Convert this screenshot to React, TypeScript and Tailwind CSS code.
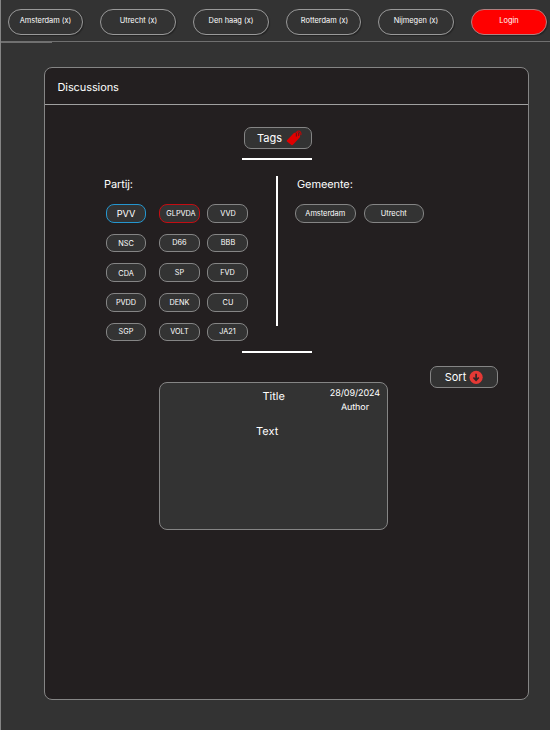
import React from "react";

type Chip = { label: string; border?: string; text?: string };

const cities = [
  { label: "Amsterdam (x)", gap: "ml-[7px]", width: "w-[75px]", nudge: "" },
  { label: "Utrecht (x)", gap: "ml-[17px]", width: "w-[76px]", nudge: "pl-px" },
  { label: "Den haag (x)", gap: "ml-[17px]", width: "w-[76px]", nudge: "" },
  { label: "Rotterdam (x)", gap: "ml-[17px]", width: "w-[75px]", nudge: "pl-[2px]" },
  { label: "Nijmegen (x)", gap: "ml-[17px]", width: "w-[76px]", nudge: "" },
];

const parties: Chip[] = [
  { label: "PVV", border: "border-[#2496cf] text-[9.2px]", text: "pt-[2px]" },
  { label: "GLPVDA", border: "border-[#c40d12] text-[7.3px]", text: "pl-[3px] pt-[2px]" },
  { label: "VVD", text: "pt-[2px] pl-px" },
  { label: "NSC", text: "pt-[3px]" },
  { label: "D66", text: "pt-[2px]" },
  { label: "BBB", text: "pt-[2px] pl-px" },
  { label: "CDA", text: "pt-[3px]" },
  { label: "SP", text: "pt-px" },
  { label: "FVD", text: "pt-px" },
  { label: "PVDD", text: "pt-[2px]" },
  { label: "DENK", text: "pt-[2px]" },
  { label: "CU", text: "pt-[2px] pl-px" },
  { label: "SGP", text: "pt-px" },
  { label: "VOLT", text: "pt-px" },
  { label: "JA21", text: "pt-px" },
];

function TagIcon() {
  return (
    <svg width="16" height="16" viewBox="0 0 16 16" className="shrink-0">
      <path d="M1 10.2 L7.4 3.6 Q8 3 9 2.8 L12.1 2.3 Q13.4 2.2 13.7 3.5 L14.1 6.2 Q14.2 7 13.5 7.8 L7.2 14.6 Q6 15.8 4.8 14.6 L1 11.6 Q.3 10.9 1 10.2Z" fill="#e00000" />
      <path d="M10.2 6.4 V3 Q10.4 1 12.6 1 Q14.8 1 14.9 3 V5.2" fill="none" stroke="#d00000" strokeWidth="1" />
      <path d="M10.4 3.5 V6.2 M12.6 3.2 V5.5" fill="none" stroke="#4a1717" strokeWidth=".8" strokeLinecap="round" />
    </svg>
  );
}

function SortIcon() {
  return (
    <svg width="14" height="14" viewBox="0 0 14 14" className="shrink-0">
      <circle cx="7.1" cy="7.3" r="6.6" fill="#e53935" />
      <path d="M7.1 3.7 V10 M4.4 7.5 L7.1 10.2 L9.8 7.5" fill="none" stroke="#332426" strokeWidth="1.7" />
    </svg>
  );
}

export default function App() {
  return (
    <div className="flex h-[730px] w-[550px] flex-col overflow-hidden border-l border-[#858585] bg-[#333333] font-['Inter',sans-serif] text-white [text-rendering:geometricPrecision]">
      <header className="flex h-[42px] shrink-0 border-b border-[#707070] pt-[9px]">
        {cities.map((c) => (
          <button key={c.label} className={`flex h-[26px] shrink-0 items-center justify-center rounded-full border border-[#999999] pb-[3px] text-[7.4px] shadow-[1px_1px_1px_rgba(0,0,0,0.3)] ${c.gap} ${c.width} ${c.nudge}`}>
            {c.label}
          </button>
        ))}
        <button className="ml-[17px] flex h-[26px] w-[76px] shrink-0 items-center justify-center rounded-full border border-[#b08080] bg-[#ff0000] pb-[3px] text-[7.4px] shadow-[1px_1px_1px_rgba(0,0,0,0.3)]">
          Login
        </button>
      </header>
      <div className="h-px w-[51px] shrink-0 bg-[#707070]" />
      <main className="ml-[43px] mt-[24px] flex h-[633px] w-[485px] shrink-0 flex-col rounded-[8px] border border-[#858585] bg-[#231f20]">
        <h1 className="flex h-[37px] shrink-0 items-center border-b border-[#a0a0a0] pl-[12.5px] pt-[2px] text-[11px] tracking-[-0.1px]">Discussions</h1>

        <button className="ml-[199px] mt-[22px] flex h-[22px] w-[68px] shrink-0 items-center justify-center gap-[4px] rounded-[7px] border border-[#858585] bg-[#333333] pl-[3px] text-[11px]">
          Tags
          <TagIcon />
        </button>
        <div className="ml-[197px] mt-[9px] h-[2px] w-[70px] shrink-0 bg-white" />

        <div className="mt-[16px] flex h-[150px] shrink-0">
          <section className="w-[231px] shrink-0 pl-[59px]">
            <h2 className="h-[28px] text-[11px] leading-[16px] tracking-[-0.1px]">Partij:</h2>
            <div className="ml-[2px] grid w-[142px] auto-rows-[18px] grid-cols-[40px_41px_41px] gap-y-[11.7px] [column-gap:0] justify-between">
              {parties.map((p, i) => (
                <button
                  key={p.label}
                  className={`flex h-[18.5px] items-center justify-center rounded-[8px] border bg-[#333333] ${p.border ?? "border-[#858585] text-[7.3px]"} ${p.text ?? ""} ${i % 3 === 1 ? "ml-[3px] mr-[-3px]" : ""}`}
                >
                  {p.label}
                </button>
              ))}
            </div>
          </section>
          <div className="w-[2px] shrink-0 bg-white" />
          <section className="pl-[17px]">
            <h2 className="h-[28px] pl-[2px] text-[11px] leading-[16px] tracking-[-0.1px]">Gemeente:</h2>
            <div className="flex gap-[8px]">
              {["Amsterdam", "Utrecht"].map((g) => (
                <button key={g} className="flex h-[18.5px] w-[60.5px] items-center justify-center rounded-[9px] border border-[#858585] bg-[#333333] text-[7.4px]">
                  {g}
                </button>
              ))}
            </div>
          </section>
        </div>
        <div className="ml-[197px] mt-[25px] h-[2px] w-[70px] shrink-0 bg-white" />

        <div className="mt-[13px] flex shrink-0">
          <article className="ml-[114px] mt-[16px] h-[148px] w-[229px] shrink-0 rounded-[8px] border border-[#858585] bg-[#333333]">
            <div className="flex h-[34px] justify-between pr-[7px] pt-[5px]">
              <h3 className="ml-[102.5px] text-[11px] leading-[16px]">Title</h3>
              <div className="-mt-px text-center text-[9px] leading-[14px] tracking-[-0.1px]">
                <p>28/09/2024</p>
                <p>Author</p>
              </div>
            </div>
            <p className="ml-[96px] mt-[6px] text-[11px] leading-[16px]">Text</p>
          </article>
          <button className="ml-[42px] flex h-[22px] w-[68px] shrink-0 items-center justify-center gap-[3px] rounded-[7px] border border-[#858585] bg-[#333333] text-[11px]">
            Sort
            <SortIcon />
          </button>
        </div>
      </main>
    </div>
  );
}
